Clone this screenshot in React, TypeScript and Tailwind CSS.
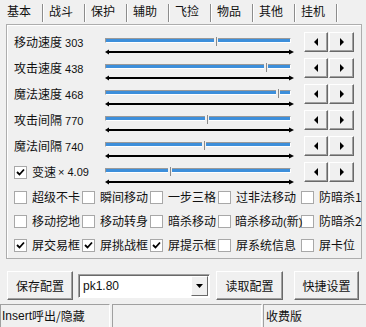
import React from "react";

const tabs = ["基本", "战斗", "保护", "辅助", "飞捡", "物品", "其他", "挂机"];

const rows = [
  { label: "移动速度", val: "303", pos: 111 },
  { label: "攻击速度", val: "438", pos: 161 },
  { label: "魔法速度", val: "468", pos: 173 },
  { label: "攻击间隔", val: "770", pos: 102 },
  { label: "魔法间隔", val: "740", pos: 99 },
];

const checkRows: { label: string; checked: boolean }[][] = [
  [
    { label: "超级不卡", checked: false },
    { label: "瞬间移动", checked: false },
    { label: "一步三格", checked: false },
    { label: "过非法移动", checked: false },
    { label: "防暗杀1", checked: false },
  ],
  [
    { label: "移动挖地", checked: false },
    { label: "移动转身", checked: false },
    { label: "暗杀移动", checked: false },
    { label: "暗杀移动(新)", checked: false },
    { label: "防暗杀2", checked: false },
  ],
  [
    { label: "屏交易框", checked: true },
    { label: "屏挑战框", checked: true },
    { label: "屏提示框", checked: true },
    { label: "屏系统信息", checked: false },
    { label: "屏卡位", checked: false },
  ],
];

const colW = ["w-[68px]", "w-[68px]", "w-[68px]", "w-[83px]", "w-[60px]"];

function CheckBox({ checked }: { checked: boolean }) {
  return (
    <div className="w-[13px] h-[13px] shrink-0 bg-white border border-[#a8a8a8] flex items-center justify-center">
      {checked && (
        <svg width="11" height="11" viewBox="0 0 11 11">
          <polyline points="2,5 4.5,7.5 9,2.5" fill="none" stroke="#000" strokeWidth="1.8" />
        </svg>
      )}
    </div>
  );
}

function Label({ text }: { text: string }) {
  const m = text.match(/^(.*)\((.*)\)$/);
  if (m) {
    return (
      <span className="relative z-10 ml-[4px]">
        {m[1]}
        <span className="font-['Liberation_Sans',sans-serif] text-[11px]">(</span>
        {m[2]}
        <span className="font-['Liberation_Sans',sans-serif] text-[11px]">)</span>
      </span>
    );
  }
  return <span className="ml-[5px]">{text}</span>;
}

function Slider({ pos }: { pos: number }) {
  return (
    <div className="relative w-[189px] h-[26px] shrink-0">
      <div className="pt-[9px]">
        <div className="w-[186px] h-[5px] border-t border-l border-[#9a9a9a] border-b border-r border-b-white border-r-white bg-[#3d8fdb]" />
        <svg width="189" height="6" viewBox="0 0 189 6" className="mt-[6px] block">
          <line x1="3" y1="3" x2="185" y2="3" stroke="#000" strokeWidth="2.2" />
          <polygon points="0,3 4,0.5 4,5.5" fill="#000" />
          <polygon points="189,3 184,0.5 184,5.5" fill="#000" />
        </svg>
      </div>
      <div
        className="absolute top-[8px] w-[4px] h-[9px] bg-[#f0f0f0] flex justify-center"
        style={{ left: pos - 2 }}
      >
        <div className="w-[1px] h-full bg-[#8a8a8a]" />
      </div>
    </div>
  );
}

function SpinBtn({ dir, w }: { dir: "l" | "r"; w: string }) {
  return (
    <div
      className={`${w} h-[20px] bg-[#f0f0f0] border border-t-white border-l-white border-b-[#696969] border-r-[#696969] shadow-[inset_-1px_-1px_0_#a0a0a0] flex items-center justify-center`}
    >
      <svg width="5" height="8" viewBox="0 0 5 8">
        {dir === "l" ? (
          <polygon points="4,0 4,8 0,4" fill="#000" />
        ) : (
          <polygon points="1,0 1,8 5,4" fill="#000" />
        )}
      </svg>
    </div>
  );
}

function Button({ label, w }: { label: string; w: string }) {
  return (
    <div
      className={`${w} h-[29px] shrink-0 bg-[#f0f0f0] border border-t-white border-l-white border-b-[#696969] border-r-[#696969] shadow-[inset_-1px_-1px_0_#a0a0a0] flex items-center justify-center text-[12px] leading-none`}
    >
      {label}
    </div>
  );
}

export default function App() {
  return (
    <div className="w-[366px] h-[327px] bg-[#f0f0f0] overflow-hidden flex flex-col text-[#111] text-[12px] font-['Noto_Sans_CJK_SC',sans-serif]">
      {/* Tabs */}
      <div className="h-[24px] flex pl-[2px] shrink-0">
        {tabs.map((t) => (
          <div key={t} className="w-[42px] h-[22px] flex items-center">
            <div className="flex-1 pl-[5px] leading-none">{t}</div>
            <div className="h-[18px] mt-[3px] w-[1px] bg-[#8c8c8c]" />
            <div className="h-[18px] mt-[3px] w-[1px] bg-white" />
          </div>
        ))}
      </div>

      {/* Panel */}
      <div className="ml-[6px] w-[356px] h-[235px] shrink-0 border border-[#adadad] shadow-[inset_1px_1px_0_#fff] pt-[4px] pl-[7px]">
        {rows.map((r) => (
          <div key={r.label} className="h-[26px] flex items-center">
            <div className="w-[91px] shrink-0 flex items-baseline leading-none whitespace-nowrap">
              <span className="text-[12px]">{r.label}</span>
              <span className="ml-[3px] text-[11px] font-['Liberation_Sans',sans-serif]">{r.val}</span>
            </div>
            <Slider pos={r.pos} />
            <div className="flex gap-[1px] ml-[10px]">
              <SpinBtn dir="l" w="w-[24px]" />
              <SpinBtn dir="r" w="w-[25px]" />
            </div>
          </div>
        ))}
        <div className="h-[26px] flex items-center">
          <div className="w-[91px] shrink-0 flex items-center leading-none whitespace-nowrap">
            <CheckBox checked={true} />
            <span className="ml-[5px]">变速</span>
            <span className="ml-[2px] text-[11px] font-['Liberation_Sans',sans-serif]">× 4.09</span>
          </div>
          <Slider pos={65} />
          <div className="flex gap-[1px] ml-[10px]">
            <SpinBtn dir="l" w="w-[24px]" />
            <SpinBtn dir="r" w="w-[25px]" />
          </div>
        </div>
        {checkRows.map((row, i) => (
          <div key={i} className="h-[24px] flex items-center">
            {row.map((c, j) => (
              <div key={c.label} className={`${colW[j]} shrink-0 flex items-center whitespace-nowrap leading-none`}>
                <CheckBox checked={c.checked} />
                <Label text={c.label} />
              </div>
            ))}
          </div>
        ))}
      </div>

      {/* Buttons row */}
      <div className="mt-[12px] h-[29px] flex items-center pl-[7px] shrink-0">
        <Button label="保存配置" w="w-[66px]" />
        <div className="ml-[5px] w-[132px] h-[24px] bg-white border border-t-[#a0a0a0] border-l-[#a0a0a0] border-b-white border-r-white shadow-[inset_1px_1px_0_#696969] flex items-center">
          <span className="flex-1 pl-[4px] text-[12px] font-['Liberation_Sans',sans-serif] leading-none">pk1.80</span>
          <div className="w-[17px] h-[20px] mr-[1px] bg-[#f0f0f0] border border-t-white border-l-white border-b-[#696969] border-r-[#696969] flex items-center justify-center">
            <svg width="7" height="4" viewBox="0 0 7 4">
              <polygon points="0,0 7,0 3.5,4" fill="#000" />
            </svg>
          </div>
        </div>
        <div className="ml-[6px]">
          <Button label="读取配置" w="w-[67px]" />
        </div>
        <div className="ml-[11px]">
          <Button label="快捷设置" w="w-[65px]" />
        </div>
      </div>

      {/* Status bar */}
      <div className="mt-[4px] h-[23px] flex shrink-0">
        <div className="w-[110px] h-full border-t border-l border-[#a0a0a0] border-r border-r-white flex items-center pl-[1px] leading-none whitespace-nowrap">
          <span className="font-['Liberation_Sans',sans-serif] text-[12px]">Insert</span>
          <span>呼出/隐藏</span>
        </div>
        <div className="ml-[2px] w-[150px] h-full border-t border-l border-[#a0a0a0] border-r border-r-white" />
        <div className="ml-[1px] flex-1 h-full border-t border-l border-[#a0a0a0] flex items-center pl-[2px] leading-none">
          收费版
        </div>
      </div>
    </div>
  );
}
